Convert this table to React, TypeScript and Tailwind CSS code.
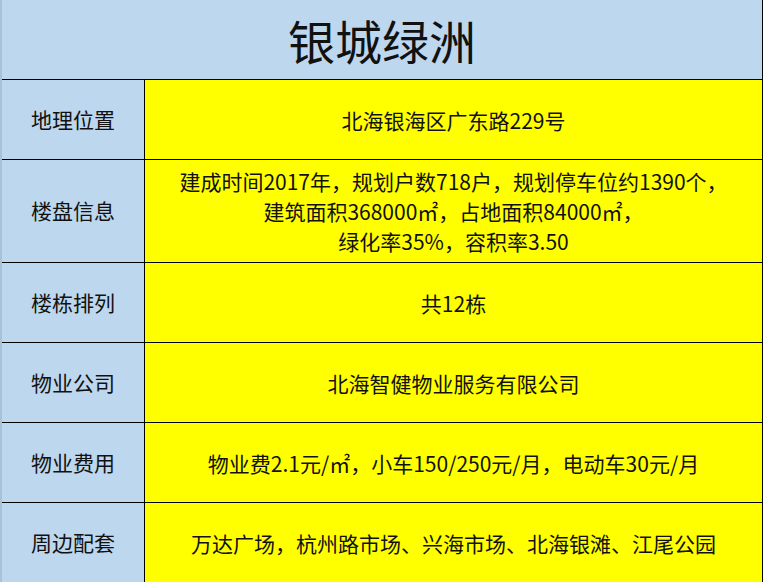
import React from 'react';

const rows: { label: string; lines: string[]; h: string }[] = [
  { label: '地理位置', lines: ['北海银海区广东路229号'], h: 'h-[80px]' },
  {
    label: '楼盘信息',
    lines: [
      '建成时间2017年，规划户数718户，规划停车位约1390个，',
      '建筑面积368000㎡，占地面积84000㎡，',
      '绿化率35%，容积率3.50',
    ],
    h: 'h-[103px]',
  },
  { label: '楼栋排列', lines: ['共12栋'], h: 'h-[80px]' },
  { label: '物业公司', lines: ['北海智健物业服务有限公司'], h: 'h-[80px]' },
  { label: '物业费用', lines: ['物业费2.1元/㎡，小车150/250元/月，电动车30元/月'], h: 'h-[80px]' },
  { label: '周边配套', lines: ['万达广场，杭州路市场、兴海市场、北海银滩、江尾公园'], h: 'h-[80px]' },
];

export default function App() {
  return (
    <div
      className="w-[763px] h-[582px] overflow-hidden bg-[#bdd7ee] border-l-2 border-l-[#a9c1d9] border-r border-r-black text-[#111]"
      style={{ fontFamily: '"Noto Sans CJK SC", "Noto Sans", sans-serif' }}
    >
      {/* Title */}
      <div className="h-[80px] flex items-center justify-center border-b border-black">
        <span className="text-[47px] leading-none">银城绿洲</span>
      </div>

      {rows.map((r) => (
        <div key={r.label} className={`flex border-b border-black ${r.h}`}>
          <div className="w-[143px] shrink-0 flex items-center justify-center border-r border-black text-[21px]">
            {r.label}
          </div>
          <div className="flex-1 bg-[#ffff00] flex flex-col items-center justify-center text-[21px] leading-[30px]">
            {r.lines.map((l) => (
              <div key={l}>{l}</div>
            ))}
          </div>
        </div>
      ))}
    </div>
  );
}
